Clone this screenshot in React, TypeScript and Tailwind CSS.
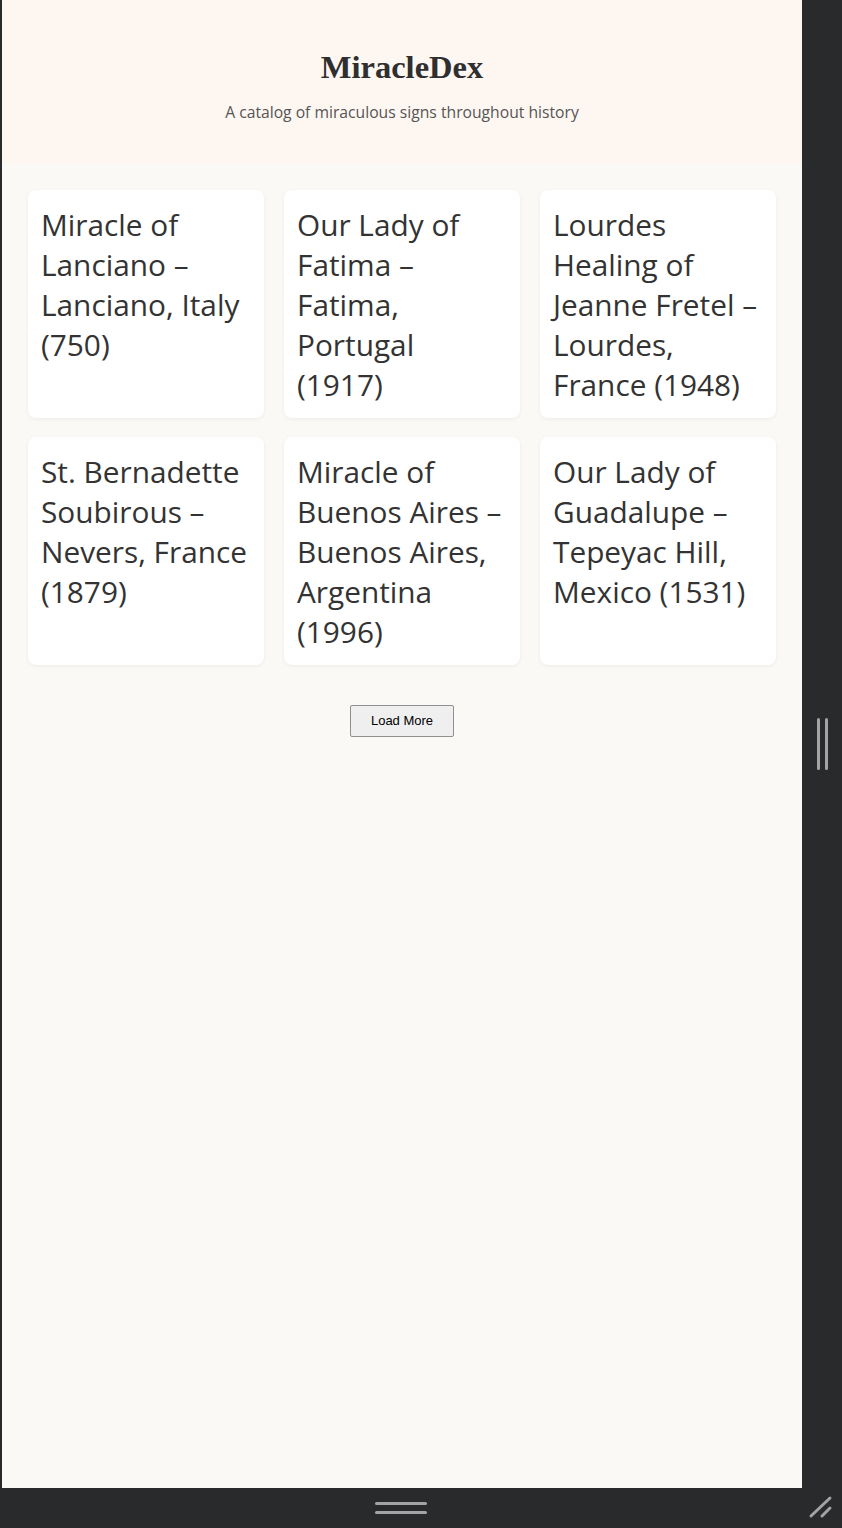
const miracles = [
  "Miracle of Lanciano – Lanciano, Italy (750)",
  "Our Lady of Fatima – Fatima, Portugal (1917)",
  "Lourdes Healing of Jeanne Fretel – Lourdes, France (1948)",
  "St. Bernadette Soubirous – Nevers, France (1879)",
  "Miracle of Buenos Aires – Buenos Aires, Argentina (1996)",
  "Our Lady of Guadalupe – Tepeyac Hill, Mexico (1531)",
];

export default function App() {
  return (
    <div className="flex flex-col w-[842px] h-[1528px] bg-[#292a2c]">
      <div className="flex h-[1488px]">
        <div className="w-[2px] bg-[#292a2c]" />
        <main className="w-[800px] bg-[#fbf9f5] font-['Open_Sans',sans-serif]">
          <header className="h-[164px] bg-[#fef7f1] flex flex-col items-center pt-[48px]">
            <h1 className="font-['Liberation_Serif',serif] font-bold text-[32.5px] leading-[38px] text-[#2f2f2f]">
              MiracleDex
            </h1>
            <p className="mt-[16px] text-[15.7px] leading-[20px] text-[#555]">
              A catalog of miraculous signs throughout history
            </p>
          </header>
          <section className="grid grid-cols-3 gap-x-[20px] gap-y-[19px] p-[26px]">
            {miracles.map((m) => (
              <div
                key={m}
                className="bg-white rounded-lg pl-[13px] pr-[14px] pt-[15px] pb-[13px] shadow-[0_1px_4px_rgba(0,0,0,0.06)] text-[29.8px] leading-[40px] text-[#333]"
              >
                {m}
              </div>
            ))}
          </section>
          <div className="flex justify-center mt-[14px]">
            <button className="w-[104px] h-[32px] bg-[#efefef] border border-[#8f8f8f] rounded-[2px] text-[13px] text-black font-['Liberation_Sans',sans-serif]">
              Load More
            </button>
          </div>
        </main>
        <div className="w-[40px] flex items-center justify-center gap-[5px]">
          <div className="w-[3px] h-[52px] rounded-full bg-[#a3a3a3]" />
          <div className="w-[3px] h-[52px] rounded-full bg-[#a3a3a3]" />
        </div>
      </div>
      <div className="relative h-[40px] flex flex-col items-center justify-center gap-[6px]">
        <div className="w-[52px] h-[3px] rounded-full bg-[#a3a3a3] ml-[-40px]" />
        <div className="w-[52px] h-[3px] rounded-full bg-[#a3a3a3] ml-[-40px]" />
        <svg className="absolute right-[8px] bottom-[8px]" width="26" height="26" viewBox="0 0 26 26">
          <line x1="3" y1="22" x2="22" y2="4" stroke="#a3a3a3" strokeWidth="3" strokeLinecap="round" />
          <line x1="14" y1="22" x2="22" y2="14" stroke="#a3a3a3" strokeWidth="3" strokeLinecap="round" />
        </svg>
      </div>
    </div>
  );
}
